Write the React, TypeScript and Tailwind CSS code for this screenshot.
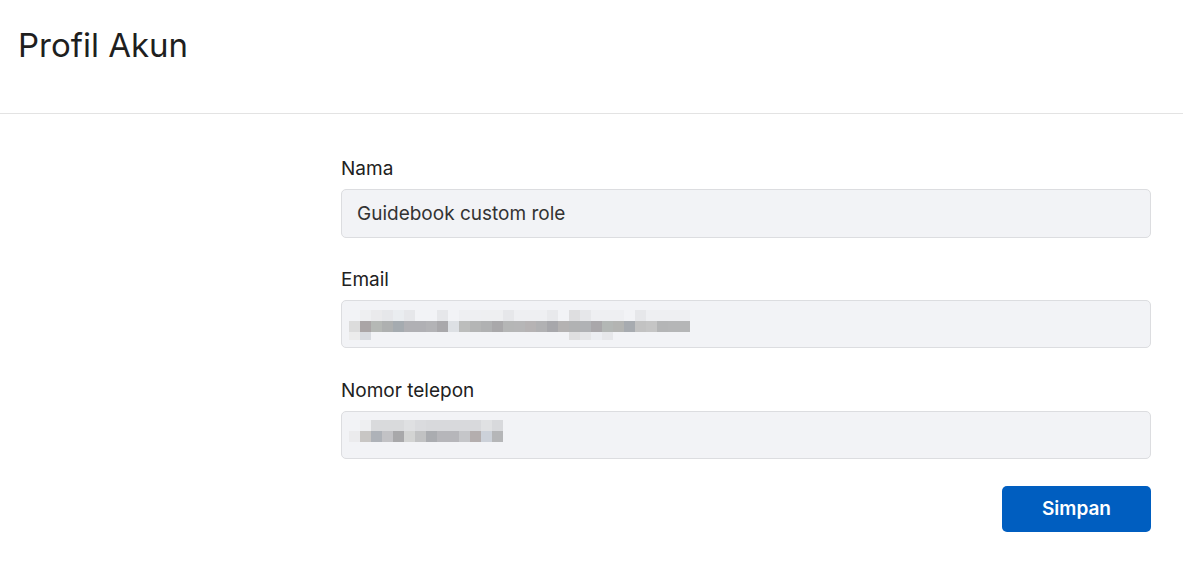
import React from "react";

const emailRows: string[][] = [
  ["", "#eeeff1", "#eaeaec", "#e6e7ea", "#eaedf0", "#e6e7ea", "", "", "#e6e7ea", "", "#eeeff2", "#eeeff2", "#eeeff1", "#eeeff1", "#e6e7ea", "#eeeff2", "#eeeff2", "#eeeff2", "#e8e9ec", "", "#dedee0", "#e6e7ea", "#eeeff2", "#eeeff2", "#eeeff2", "", "#e6e7ea", "#eeeff2", "#eeeff2", "#eeeff2", "#eeeff2"],
  ["#dcdcdc", "#aaa5a6", "#b5b8b5", "#aeb0b0", "#a5abb0", "#b0b0b4", "#b0b0b4", "#b3b3b6", "#a9a8ab", "#dde0e4", "#bcbdbc", "#b4b5b5", "#b0b1b2", "#a9a8aa", "#b5b6b6", "#b6b6b7", "#b6b3b4", "#b1b1b3", "#a7a7ab", "#b4b2b2", "#b1b2b3", "#b0b2b5", "#a9a7aa", "#b3b7b5", "#b3b4b2", "#a7abb0", "#c2c2c2", "#c5c5c5", "#b4b5b6", "#b5b6b7", "#b5b6b7"],
  ["#ececec", "#d8dbe0", "", "", "", "", "", "", "", "", "", "", "", "", "", "", "", "", "", "", "#dfdfe0", "#e5e6e8", "#eceef2", "#e6e7ea", "", "", "", "", "", "", ""],
];

const phoneRows: string[][] = [
  ["", "#eeeff1", "#d9dadc", "#d9dadc", "#d9dadc", "#dfe0e2", "#dadbde", "#d8d9dc", "#d8d9dc", "#d8d9dc", "#d8d9dc", "#d8d9dc", "#e0e1e3", "#d8d9dc"],
  ["#ebebed", "#c8c6c4", "#aeb2b8", "#c2c2c5", "#a8a8aa", "#d3d4d3", "#c1c2c3", "#aaacb0", "#b6b6ba", "#b6b6ba", "#c5c6c9", "#b4aeae", "#ccd1d9", "#b5b6b8"],
];

function Mosaic({ rows, h }: { rows: string[][]; h: number }) {
  return (
    <div className="flex flex-col">
      {rows.map((r, i) => (
        <div key={i} className="flex">
          {r.map((c, j) => (
            <div
              key={j}
              className="w-[11px]"
              style={{ height: i === rows.length - 1 ? h : 11, backgroundColor: c || "transparent" }}
            />
          ))}
        </div>
      ))}
    </div>
  );
}

export default function App() {
  return (
    <div
      className="min-h-[575px] bg-white text-[#212121]"
      style={{ fontFamily: "Inter, 'Noto Sans', sans-serif" }}
    >
      <header className="h-[114px] border-b border-[#e3e3e3] pl-[18px] pt-[25px]">
        <h1 className="text-[33px] leading-[40px] font-normal text-[#1f1f1f]">Profil Akun</h1>
      </header>
      <main className="pl-[341px] pr-[32px] pt-[42px]">
        <div className="flex flex-col gap-[29px]">
          <div className="flex flex-col">
            <label className="text-[19px] leading-[24px] font-normal pt-[1px] mb-[8px]">Nama</label>
            <div className="h-[49px] rounded-[5px] border border-[#dcdde0] bg-[#f2f3f6] pl-[15px] pt-[1px] flex items-center text-[19px] text-[#333]">
              Guidebook custom role
            </div>
          </div>
          <div className="flex flex-col">
            <label className="text-[19px] leading-[24px] font-normal pt-[1px] mb-[8px]">Email</label>
            <div className="h-[48px] rounded-[5px] border border-[#dcdde0] bg-[#f2f3f6] pl-[7px] pt-[9px]">
              <Mosaic rows={emailRows} h={8} />
            </div>
          </div>
          <div className="flex flex-col mt-[1px]">
            <label className="text-[19px] leading-[24px] font-normal pt-[1px] mb-[8px]">Nomor telepon</label>
            <div className="h-[48px] rounded-[5px] border border-[#dcdde0] bg-[#f2f3f6] pl-[7px] pt-[8px]">
              <Mosaic rows={phoneRows} h={11} />
            </div>
          </div>
        </div>
        <div className="flex justify-end mt-[27px]">
          <button className="w-[149px] h-[46px] rounded-[5px] bg-[#005ec0] text-white text-[19px] font-semibold">
            Simpan
          </button>
        </div>
      </main>
    </div>
  );
}
